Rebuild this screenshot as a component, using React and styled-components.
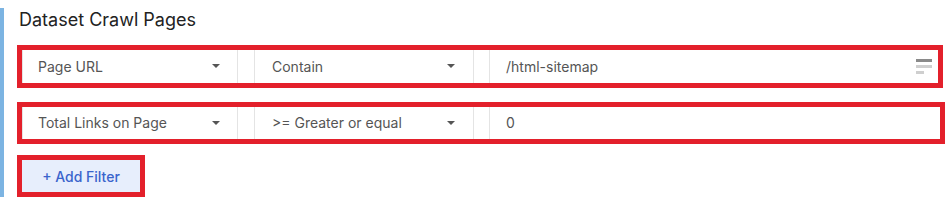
import React from 'react';
import styled, { createGlobalStyle } from 'styled-components';

const GlobalStyle = createGlobalStyle`
  body {
    margin: 0;
    background: #fff;
    font-family: Inter, "Noto Sans", sans-serif;
  }
`;

const Section = styled.section`
  margin-top: 8px;
  border-left: 4px solid #7cb4e2;
  padding-left: 13px;
  height: 189px;
  display: flex;
  flex-direction: column;
  align-items: flex-start;
`;

const Title = styled.h2`
  margin: 0 0 13px 2px;
  font-size: 18px;
  line-height: 24px;
  font-weight: 400;
  color: #222;
`;

const FilterRow = styled.div`
  display: flex;
  align-items: stretch;
  box-sizing: border-box;
  width: ${(p) => p.$width}px;
  height: 43px;
  border: 5px solid #e3202b;
  margin-bottom: ${(p) => p.$gap}px;
  background: #fff;
`;

const Select = styled.div`
  display: flex;
  align-items: center;
  justify-content: space-between;
  box-sizing: border-box;
  width: ${(p) => p.$width}px;
  padding: 0 ${(p) => p.$padRight}px 0 ${(p) => p.$padLeft}px;
  border-left: 1px solid #e4e4e4;
  border-right: 1px solid #e4e4e4;
  margin-right: ${(p) => p.$gap}px;
  font-size: 14px;
  color: #555;
`;

const Caret = styled.span`
  width: 0;
  height: 0;
  border-left: 4px solid transparent;
  border-right: 4px solid transparent;
  border-top: 4px solid #555;
`;

const ValueField = styled.div`
  flex: 1;
  display: flex;
  align-items: center;
  justify-content: space-between;
  padding: 0 6px 0 16px;
  border-left: 1px solid #e4e4e4;
  font-size: 14px;
  color: #555;
`;

const Bars = styled.span`
  display: flex;
  flex-direction: column;
  gap: 3px;
  width: 16px;
`;

const Bar = styled.span`
  height: 3px;
  width: ${(p) => p.$width}px;
  background: ${(p) => p.$color};
`;

const AddButton = styled.button`
  box-sizing: border-box;
  width: 128px;
  height: 42px;
  border: 5px solid #e3202b;
  background: #e7eefc;
  color: #3a64cc;
  font-family: Inter, "Noto Sans", sans-serif;
  font-size: 14px;
  font-weight: 500;
  cursor: pointer;
  padding: 0;
`;

const filters = [
  { field: 'Page URL', op: 'Contain', value: '/html-sitemap', icon: true, width: 926 },
  { field: 'Total Links on Page', op: '>= Greater or equal', value: '0', icon: false, width: 928 },
];

const App = () => (
  <>
    <GlobalStyle />
    <Section>
      <Title>Dataset Crawl Pages</Title>
      {filters.map((f, i) => (
        <FilterRow key={i} $width={f.width} $gap={i === 0 ? 14 : 11}>
          <Select $width={216} $padLeft={15} $padRight={17} $gap={16}>
            {f.field}
            <Caret />
          </Select>
          <Select $width={220} $padLeft={17} $padRight={18} $gap={15}>
            {f.op}
            <Caret />
          </Select>
          <ValueField>
            {f.value}
            {f.icon && (
              <Bars>
                <Bar $width={16} $color="#8a8a8a" />
                <Bar $width={16} $color="#cfcfcf" />
                <Bar $width={8} $color="#cfcfcf" />
              </Bars>
            )}
          </ValueField>
        </FilterRow>
      ))}
      <AddButton>+ Add Filter</AddButton>
    </Section>
  </>
);

export default App;
